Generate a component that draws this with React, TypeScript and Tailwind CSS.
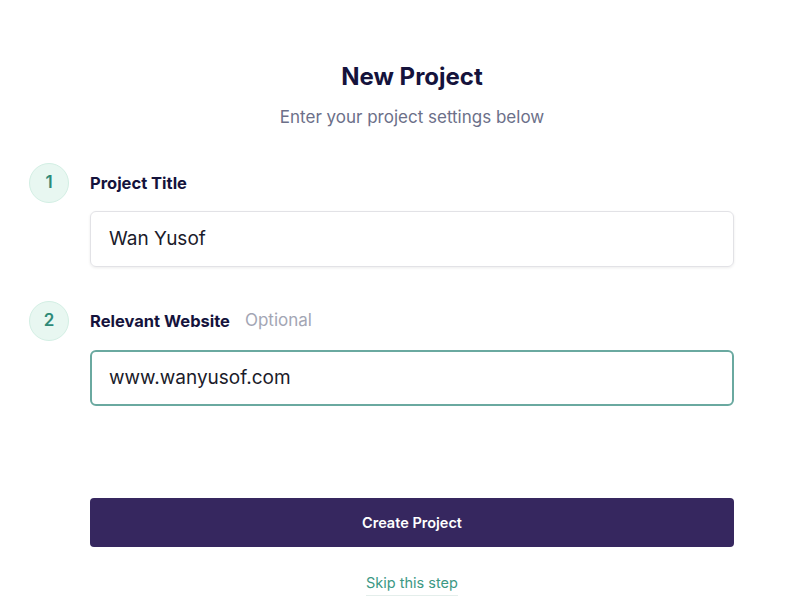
const font = { fontFamily: 'Inter, "Noto Sans", sans-serif' };

function Step({ n }: { n: number }) {
  return (
    <div className="w-10 h-10 shrink-0 rounded-full bg-[#e8f7f1] border border-[#d3efe4] flex items-center justify-center text-[17px] font-semibold text-[#2e8a78]">
      {n}
    </div>
  );
}

export default function App() {
  return (
    <div className="w-[800px] h-[611px] bg-white flex flex-col" style={font}>
      {/* Header, centred on the form column */}
      <div className="pt-[61px] pl-[90px] pr-[66px] flex flex-col items-center">
        <h1 className="text-[24px] leading-8 font-bold text-[#15133c]">New Project</h1>
        <p className="mt-3 text-[17px] leading-6 text-[#6c7089]">Enter your project settings below</p>
      </div>

      {/* Step 1 */}
      <div className="mt-[34px] pl-[29px] pr-[66px]">
        <div className="flex items-center gap-[21px]">
          <Step n={1} />
          <span className="text-[16.5px] font-bold text-[#15133c]">Project Title</span>
        </div>
        <div className="mt-2 ml-[61px] h-14 rounded-md border border-[#e2e2e6] shadow-[0_1px_3px_rgba(0,0,0,0.08)] flex items-center px-[18px] text-[19px] text-[#1b1b2a]">
          Wan Yusof
        </div>
      </div>

      {/* Step 2 */}
      <div className="mt-[34px] pl-[29px] pr-[66px]">
        <div className="flex items-center gap-[21px]">
          <Step n={2} />
          <span className="text-[16.5px] font-bold text-[#15133c]">Relevant Website</span>
          <span className="-ml-[6px] text-[17px] text-[#a3a6b4]">Optional</span>
        </div>
        <div className="mt-[9px] ml-[61px] h-14 rounded-md border-2 border-[#6aa9a0] flex items-center px-[17px] text-[19px] text-[#1b1b2a]">
          www.wanyusof.com
        </div>
      </div>

      {/* Actions */}
      <div className="mt-[92px] pl-[90px] pr-[66px]">
        <button className="w-full h-[49px] rounded bg-[#36275f] text-white text-[14.5px] font-semibold">
          Create Project
        </button>
      </div>
      <div className="mt-[26px] pl-[90px] pr-[66px] flex justify-center">
        <a className="text-[14.5px] leading-5 text-[#3c9884] border-b border-[#e4eeeb] pb-[2px]">Skip this step</a>
      </div>
    </div>
  );
}
